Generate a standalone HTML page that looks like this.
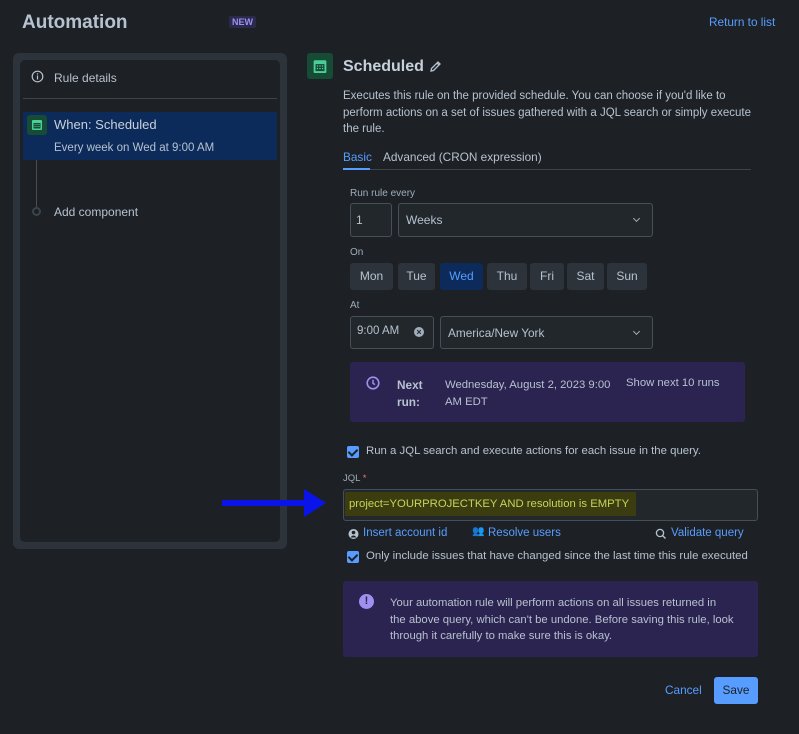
<!DOCTYPE html>
<html><head><meta charset="utf-8">
<style>
*{box-sizing:border-box;margin:0;padding:0}
body{width:799px;height:734px;background:#1d2125;font-family:"Liberation Sans",sans-serif;color:#b6c2cf;position:relative;overflow:hidden;font-size:11.5px}
.a{position:absolute;white-space:nowrap}
.lbl{font-size:10px;color:#9fadbc}
.box{position:absolute;border:1px solid #454f59;border-radius:3px;background:#22272b}
.day{position:absolute;top:263px;height:27px;background:#2c333a;border-radius:3px;color:#b6c2cf;font-size:12px;text-align:center;line-height:27px}
.cb{position:absolute;width:12px;height:12px;background:#579dff;border-radius:2px}
.cb:after{content:"";position:absolute;left:3px;top:1px;width:4px;height:7px;border:solid #1d2125;border-width:0 2px 2px 0;transform:rotate(45deg)}
.link{color:#579dff;font-size:11.5px}
.chev{position:absolute;width:5px;height:5px;border:solid #9fadbc;border-width:0 1.5px 1.5px 0;transform:rotate(45deg)}
</style></head><body>
<div class="a" style="left:22px;top:12px;font-size:19px;font-weight:bold;color:#b6c2cf">Automation</div>
<div class="a" style="left:229px;top:16px;font-size:9px;font-weight:bold;color:#9f8fef;background:#2b2a4d;padding:1px 3px;border-radius:2px">NEW</div>
<div class="a link" style="left:709px;top:15px;font-size:11.8px">Return to list</div>

<div style="position:absolute;left:13px;top:53px;width:274px;height:496px;background:#2c333a;border-radius:6px"></div>
<div style="position:absolute;left:20px;top:60px;width:260px;height:482px;background:#1d2125;border-radius:5px"></div>
<svg class="a" style="left:31px;top:70px" width="13" height="13" viewBox="0 0 13 13"><circle cx="6.5" cy="6.5" r="5.3" fill="none" stroke="#b6c2cf" stroke-width="1.2"/><rect x="5.9" y="5.5" width="1.2" height="4" fill="#b6c2cf"/><circle cx="6.5" cy="3.9" r=".7" fill="#b6c2cf"/></svg>
<div class="a" style="left:54px;top:71px;font-size:12px">Rule details</div>
<div style="position:absolute;left:23px;top:98px;width:254px;height:1px;background:#3b444c"></div>
<div style="position:absolute;left:23px;top:112px;width:254px;height:48px;background:#0c2a5a"></div>
<div style="position:absolute;left:27px;top:115px;width:20px;height:20px;background:#164b35;border-radius:3px"></div>
<svg class="a" style="left:32px;top:119px" width="10" height="11" viewBox="0 0 10 11"><rect x="0" y="1" width="10" height="10" rx="1" fill="#4bce97"/><rect x="1.5" y="4" width="7" height="5.5" fill="#164b35"/><rect x="2.5" y="5" width="1" height="1" fill="#4bce97"/><rect x="4.5" y="5" width="1" height="1" fill="#4bce97"/><rect x="6.5" y="5" width="1" height="1" fill="#4bce97"/><rect x="2.5" y="7" width="1" height="1" fill="#4bce97"/><rect x="4.5" y="7" width="1" height="1" fill="#4bce97"/><rect x="6.5" y="7" width="1" height="1" fill="#4bce97"/></svg>
<div class="a" style="left:54px;top:117px;font-size:13px;color:#c7d1db">When: Scheduled</div>
<div class="a" style="left:54px;top:142px;font-size:11.5px;color:#b6c2cf">Every week on Wed at 9:00 AM</div>
<div style="position:absolute;left:36px;top:160px;width:1px;height:47px;background:#454f59"></div>
<div style="position:absolute;left:32px;top:207px;width:9px;height:9px;border-radius:50%;border:2px solid #3b444c"></div>
<div class="a" style="left:54px;top:205px;font-size:12px">Add component</div>

<div style="position:absolute;left:307px;top:53px;width:26px;height:26px;background:#164b35;border-radius:3px"></div>
<svg class="a" style="left:313px;top:59px" width="14" height="14" viewBox="0 0 10 11"><rect x="0" y="1" width="10" height="10" rx="1" fill="#4bce97"/><rect x="1.5" y="4" width="7" height="5.5" fill="#164b35"/><rect x="2.5" y="5" width="1" height="1" fill="#4bce97"/><rect x="4.5" y="5" width="1" height="1" fill="#4bce97"/><rect x="6.5" y="5" width="1" height="1" fill="#4bce97"/><rect x="2.5" y="7" width="1" height="1" fill="#4bce97"/><rect x="4.5" y="7" width="1" height="1" fill="#4bce97"/><rect x="6.5" y="7" width="1" height="1" fill="#4bce97"/></svg>
<div class="a" style="left:343px;top:58px;font-size:16px;font-weight:bold;color:#c7d1db">Scheduled</div>
<svg class="a" style="left:428px;top:59px" width="15" height="15" viewBox="0 0 15 15"><path d="M3 12 L3.5 9.5 L10 3 L12 5 L5.5 11.5 Z M9 4 L11 6" fill="none" stroke="#b6c2cf" stroke-width="1.3"/></svg>
<div class="a" style="left:343px;top:88px;line-height:16.5px;white-space:normal;width:420px;font-size:11.5px">Executes this rule on the provided schedule. You can choose if you'd like to<br>perform actions on a set of issues gathered with a JQL search or simply execute<br>the rule.</div>
<div class="a" style="left:343px;top:150px;color:#579dff;font-size:11.8px">Basic</div>
<div class="a" style="left:383px;top:150px;font-size:11.8px">Advanced (CRON expression)</div>
<div style="position:absolute;left:343px;top:169px;width:408px;height:1px;background:#3b444c"></div>
<div style="position:absolute;left:343px;top:168px;width:27px;height:2px;background:#579dff"></div>

<div class="a lbl" style="left:350px;top:188px">Run rule every</div>
<div class="box" style="left:350px;top:203px;width:42px;height:34px"></div><div class="a" style="left:356px;top:213px;font-size:12px">1</div>
<div class="box" style="left:398px;top:203px;width:255px;height:34px"></div><div class="a" style="left:406px;top:213px;font-size:12px">Weeks</div><div class="chev" style="left:634px;top:216px"></div>
<div class="a lbl" style="left:350px;top:247px">On</div>
<div class="day" style="left:350px;width:43px">Mon</div>
<div class="day" style="left:398px;width:37px">Tue</div>
<div class="day" style="left:440px;width:43px;background:#0c2a5a;color:#579dff">Wed</div>
<div class="day" style="left:487px;width:40px">Thu</div>
<div class="day" style="left:530px;width:34px">Fri</div>
<div class="day" style="left:567px;width:37px">Sat</div>
<div class="day" style="left:607px;width:40px">Sun</div>
<div class="a lbl" style="left:350px;top:300px">At</div>
<div class="box" style="left:350px;top:316px;width:84px;height:33px"></div><div class="a" style="left:357px;top:325px;font-size:11.5px">9:00 AM</div>
<div class="a" style="left:414px;top:327px;width:10px;height:10px;border-radius:50%;background:#9fadbc;color:#22272b;font-size:9px;line-height:10px;text-align:center;font-weight:bold">×</div>
<div class="box" style="left:440px;top:316px;width:213px;height:33px"></div><div class="a" style="left:448px;top:326px;font-size:11.8px">America/New York</div><div class="chev" style="left:634px;top:329px"></div>

<div style="position:absolute;left:350px;top:362px;width:395px;height:60px;background:#2b2350;border-radius:3px"></div>
<svg class="a" style="left:366px;top:376px" width="14" height="14" viewBox="0 0 14 14"><circle cx="7" cy="7" r="5.8" fill="none" stroke="#9f8fef" stroke-width="1.6"/><path d="M7 3.8 V7.3 L9 8.6" fill="none" stroke="#9f8fef" stroke-width="1.5"/></svg>
<div class="a" style="left:397px;top:377px;font-weight:bold;line-height:16.5px;font-size:11.8px">Next<br>run:</div>
<div class="a" style="left:445px;top:377px;line-height:16.5px;font-size:11.3px">Wednesday, August 2, 2023 9:00<br>AM EDT</div>
<div class="a" style="left:626px;top:377px;font-size:11.3px">Show next 10 runs</div>

<div class="cb" style="left:347px;top:446px"></div>
<div class="a" style="left:366px;top:445px;font-size:11.4px">Run a JQL search and execute actions for each issue in the query.</div>
<div class="a lbl" style="left:343px;top:473px;font-size:9.5px">JQL<span style="color:#f87168"> *</span></div>
<div class="box" style="left:343px;top:489px;width:415px;height:32px"></div>
<div class="a" style="left:345px;top:492px;padding:6px 4px;background:#3b3d10;color:#c8d35a;font-size:11.3px;line-height:12px">project=YOURPROJECTKEY AND resolution is EMPTY&nbsp;</div>

<svg class="a" style="left:348px;top:528px" width="11" height="12" viewBox="0 0 11 12"><circle cx="5.5" cy="6" r="5" fill="#b6c2cf"/><circle cx="5.5" cy="4.5" r="1.8" fill="#1d2125"/><path d="M2.5 9.5 Q5.5 5.5 8.5 9.5" fill="#1d2125"/></svg>
<div class="a link" style="left:363px;top:527px">Insert account id</div>
<div class="a" style="left:472px;top:526px;font-size:10px;color:#b6c2cf">👥</div>
<div class="a link" style="left:488px;top:527px">Resolve users</div>
<svg class="a" style="left:655px;top:528px" width="12" height="12" viewBox="0 0 12 12"><circle cx="5" cy="5" r="3.6" fill="none" stroke="#b6c2cf" stroke-width="1.3"/><path d="M7.6 7.6 L10.5 10.5" stroke="#b6c2cf" stroke-width="1.4"/></svg>
<div class="a link" style="left:671px;top:527px">Validate query</div>
<div class="cb" style="left:347px;top:551px"></div>
<div class="a" style="left:366px;top:550px;font-size:11.4px">Only include issues that have changed since the last time this rule executed</div>

<div style="position:absolute;left:343px;top:581px;width:415px;height:76px;background:#2b2350;border-radius:3px"></div>
<div class="a" style="left:359px;top:594px;width:15px;height:15px;border-radius:50%;background:#9f8fef;color:#2b2350;font-weight:bold;font-size:11px;text-align:center;line-height:15px">!</div>
<div class="a" style="left:390px;top:595px;line-height:16.5px;font-size:11.3px">Your automation rule will perform actions on all issues returned in<br>the above query, which can't be undone. Before saving this rule, look<br>through it carefully to make sure this is okay.</div>

<div class="a link" style="left:665px;top:683px;font-size:11.8px">Cancel</div>
<div style="position:absolute;left:714px;top:677px;width:44px;height:27px;background:#579dff;border-radius:3px;color:#1d2125;text-align:center;line-height:27px;font-size:11.8px">Save</div>

<svg class="a" style="left:220px;top:486px" width="110" height="34" viewBox="0 0 110 34"><path d="M2 17 H88" stroke="#0a14e8" stroke-width="6"/><path d="M84 3 L106 17 L84 31 Z" fill="#0a14e8"/></svg>
</body></html>
